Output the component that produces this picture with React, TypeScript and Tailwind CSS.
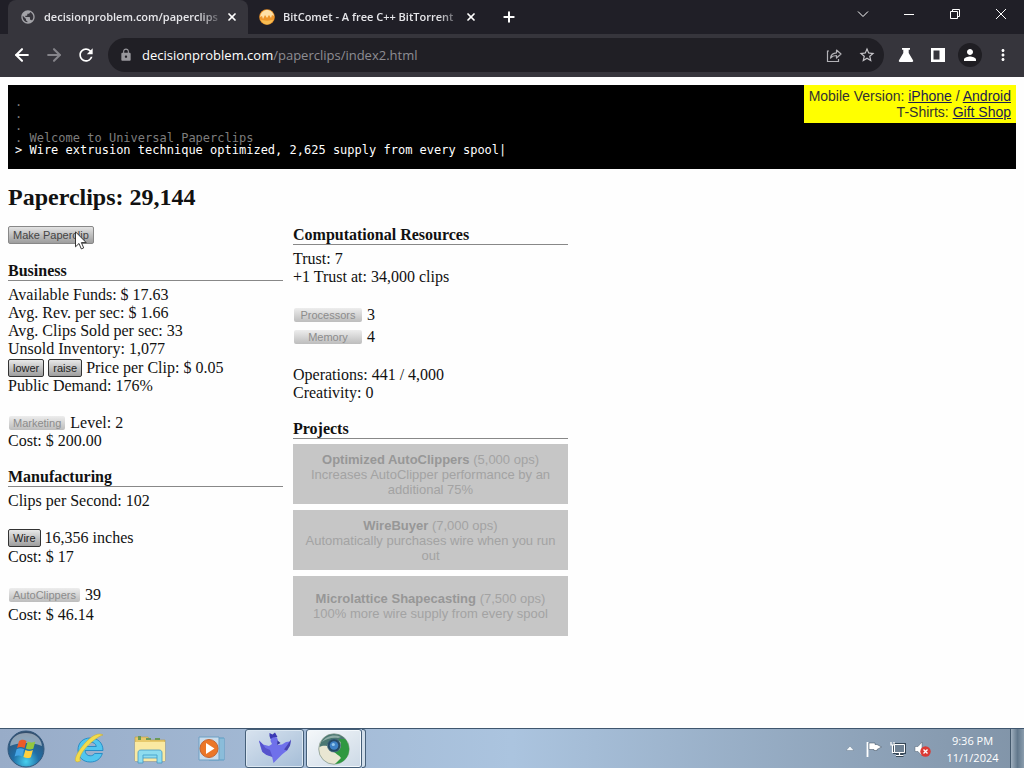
import type { ReactNode } from "react";
import { ArrowLeft, ArrowRight, Plus, X } from "lucide-react";
import { MdLock, MdMoreVert, MdPerson, MdPublic, MdRefresh, MdStarBorder } from "react-icons/md";

const uiFont = "font-['Open_Sans','Noto_Sans',sans-serif]";

/* ---------- Browser chrome ---------- */

function TabTitle({ children }: { children: ReactNode }) {
  return (
    <span className="min-w-0 flex-1 overflow-hidden text-[11px] leading-4 font-semibold whitespace-nowrap text-[#e6e6ea] [mask-image:linear-gradient(to_right,black_86%,transparent)]">
      {children}
    </span>
  );
}

function TabStrip() {
  return (
    <div className="flex h-[34px] items-stretch bg-[#201f27] pl-2">
      <div className="flex w-60 items-center rounded-t-lg bg-[#36353c] pr-2 pl-3">
        <MdPublic className="mr-2 size-4 shrink-0 text-[#a3a3a8]" />
        <TabTitle>decisionproblem.com/paperclips</TabTitle>
        <button type="button" aria-label="Close tab" className="flex size-4 items-center justify-center text-white">
          <X className="size-3" strokeWidth={3.5} />
        </button>
      </div>
      <div className="flex w-60 items-center pr-[9px] pl-[11px]">
        <svg viewBox="0 0 16 16" className="mr-2 size-4 shrink-0" aria-hidden="true">
          <circle cx="8" cy="8" r="7.8" fill="#ee962c" />
          <path d="M1 8C2 3 5 1 8 1s6 2 7 6l-2-1-1 3-2-3-2 3-2-3-2 4-1-3z" fill="#ffe0a6" />
          <path d="M1.500 10.500C4 12 12 12 14.500 10.500 13 14 10 15.500 8 15.500S3 14 1.500 10.500z" fill="#f8bd52" />
        </svg>
        <TabTitle>BitComet - A free C++ BitTorrent</TabTitle>
        <button type="button" aria-label="Close tab" className="flex size-4 items-center justify-center text-white">
          <X className="size-3" strokeWidth={3.5} />
        </button>
      </div>
      <button type="button" aria-label="New tab" className="ml-[7px] flex w-7 items-center justify-center text-white">
        <Plus className="size-4" strokeWidth={3} />
      </button>
      <div className="ml-auto flex h-7 items-center text-white">
        <button type="button" aria-label="Search tabs" className="flex w-[46px] justify-center">
          <svg viewBox="0 0 12 12" className="size-3" fill="none" stroke="currentColor"><path d="M1 3.500l5 5 5-5" /></svg>
        </button>
        <button type="button" aria-label="Minimize" className="flex w-[46px] justify-center">
          <svg viewBox="0 0 10 10" className="size-2.5" fill="none" stroke="currentColor"><path d="M0 5.500h10" /></svg>
        </button>
        <button type="button" aria-label="Restore" className="flex w-[46px] justify-center">
          <svg viewBox="0 0 10 10" className="size-2.5" fill="none" stroke="currentColor"><path d="M.5 2.500h7v7h-7zM2.500 2.500v-2h7v7h-2" /></svg>
        </button>
        <button type="button" aria-label="Close" className="flex w-[46px] justify-center">
          <svg viewBox="0 0 10 10" className="size-2.5" fill="none" stroke="currentColor"><path d="M0 0l10 10M10 0L0 10" /></svg>
        </button>
      </div>
    </div>
  );
}

function Toolbar() {
  return (
    <div className="flex h-[43px] items-center bg-[#36353c] px-3 pb-0.5 text-white">
      <button type="button" aria-label="Back" className="mr-3"><ArrowLeft className="size-5" strokeWidth={2.5} /></button>
      <button type="button" aria-label="Forward" className="mr-3 text-[#85848a]"><ArrowRight className="size-5" strokeWidth={2.5} /></button>
      <button type="button" aria-label="Reload" className="mr-3"><MdRefresh className="size-5" /></button>
      <div className="flex h-[34px] min-w-0 flex-1 items-center rounded-full bg-[#201f25] pr-2 pl-[11px]">
        <MdLock className="mr-[9px] size-[14px] shrink-0 text-[#98979c]" />
        <div className="min-w-0 flex-1 overflow-hidden text-[13px] leading-5 whitespace-nowrap text-[#8e8d93]">
          <span className="text-white">decisionproblem.com</span>/paperclips/index2.html
        </div>
        <button type="button" aria-label="Share" className="mr-4">
          <svg viewBox="0 0 16 16" className="size-4" fill="none" stroke="#b3b2b7" strokeWidth="1.200">
            <path d="M3 4H1.500v10.500h11V12" />
            <path d="M4.500 11c.5-3.500 2.500-5 6-5.200V3l4.500 4-4.500 4V8.500C7.500 8.500 6 9.300 4.500 11z" strokeLinejoin="round" />
          </svg>
        </button>
        <button type="button" aria-label="Bookmark" className="text-[#c5c4c9]"><MdStarBorder className="size-[18px]" /></button>
      </div>
      <button type="button" aria-label="Labs" className="ml-3.5">
        <svg viewBox="0 0 16 16" className="size-4" fill="#fff"><path d="M4 1h8v1.700h-1.300V6L15 13.300c.5.9 0 1.700-.9 1.700H1.900c-.9 0-1.400-.8-.9-1.700L5.300 6V2.700H4z" /></svg>
      </button>
      <button type="button" aria-label="Side panel" className="ml-4">
        <svg viewBox="0 0 16 16" className="size-4" fill="#fff"><path fillRule="evenodd" d="M1 1h14v14H1zM3.500 3.500v9h6v-9z" /></svg>
      </button>
      <button type="button" aria-label="Profile" className="ml-3 flex size-6 items-center justify-center rounded-full bg-[#1f1e23]">
        <MdPerson className="size-[18px]" />
      </button>
      <button type="button" aria-label="Menu" className="ml-3"><MdMoreVert className="size-[18px]" /></button>
    </div>
  );
}

/* ---------- Game page ---------- */

function GameButton({ children, disabled = false, wide = false }: { children: ReactNode; disabled?: boolean; wide?: boolean }) {
  const look = disabled
    ? "h-[14px] border-transparent bg-linear-to-b from-[#ededed] to-[#bdbdbd] px-[3px] text-[#8c8c8c] leading-[12px] mx-px"
    : "h-[18px] border-[#333] bg-linear-to-b from-[#ededed] to-[#999] px-1 text-[#222] leading-4";
  return (
    <button
      type="button"
      disabled={disabled}
      className={`rounded-[2px] border bg-origin-border text-[11px] font-['Liberation_Sans',Arial,sans-serif] whitespace-nowrap ${wide ? "w-[68px]" : ""} ${look}`}
    >
      {children}
    </button>
  );
}

function SectionTitle({ children }: { children: ReactNode }) {
  return <h2 className="mb-[5px] border-b border-[#888] text-[16px] leading-[18px] font-bold">{children}</h2>;
}

const consoleLines = [".", ".", ".", ". Welcome to Universal Paperclips"];

function Console() {
  return (
    <div className="relative bg-black px-[7px] pt-[11px] pb-[13px] font-['DejaVu_Sans_Mono',monospace] text-[12px] leading-3 text-[#7d7d7d]">
      {consoleLines.map((line, i) => (
        <div key={i}>{line}</div>
      ))}
      <div className="text-white">&gt; Wire extrusion technique optimized, 2,625 supply from every spool|</div>
      <div className="absolute top-0 right-0 bg-[#ffff00] px-[5px] py-[3px] text-right font-['Liberation_Sans',Arial,sans-serif] text-[14px] leading-4 text-[#333]">
        <div>
          Mobile Version: <a href="#iphone" className="text-[#1c1c50] underline">iPhone</a> /{" "}
          <a href="#android" className="text-[#1c1c50] underline">Android</a>
        </div>
        <div>
          T-Shirts: <a href="#shop" className="text-[#1c1c50] underline">Gift Shop</a>
        </div>
      </div>
    </div>
  );
}

const projects = [
  { name: "Optimized AutoClippers", cost: "(5,000 ops)", text: "Increases AutoClipper performance by an additional 75%" },
  { name: "WireBuyer", cost: "(7,000 ops)", text: "Automatically purchases wire when you run out" },
  { name: "Microlattice Shapecasting", cost: "(7,500 ops)", text: "100% more wire supply from every spool" },
];

function MouseCursor() {
  return (
    <svg viewBox="0 0 12 19" className="absolute top-[5px] left-[67px] h-[19px] w-3" aria-hidden="true">
      <path d="M.5.8v15l3.500-3.300 2.300 5.400 2.400-1-2.300-5.300h4.800z" fill="#fff" stroke="#222" strokeWidth=".9" />
    </svg>
  );
}

function Game() {
  return (
    <main className="flex-1 bg-[#fefefe] p-2 pb-10 font-['Liberation_Serif','Times_New_Roman',serif] text-[16px] leading-[18px] text-[#111]">
      <Console />
      <h1 className="mt-3.5 mb-[15px] text-2xl leading-7 font-bold">Paperclips: 29,144</h1>
      <div className="grid max-w-[560px] grid-cols-2 gap-x-2.5">
        <div>
          <div className="relative mb-[18px] flex">
            <button
              type="button"
              className="h-[18px] rounded-[2px] border border-[#888] bg-linear-to-b from-[#e8e8e8] to-[#999] bg-origin-border px-1 font-['Liberation_Sans',Arial,sans-serif] text-[11px] leading-4 text-[#444]"
            >
              Make Paperclip
            </button>
            <MouseCursor />
          </div>

          <section className="mb-[18px]">
            <SectionTitle>Business</SectionTitle>
            <div>Available Funds: $ 17.63</div>
            <div>Avg. Rev. per sec: $ 1.66</div>
            <div>Avg. Clips Sold per sec: 33</div>
            <div>Unsold Inventory: 1,077</div>
            <div className="flex h-[19px] items-center gap-1">
              <GameButton>lower</GameButton>
              <GameButton>raise</GameButton>
              <span>Price per Clip: $ 0.05</span>
            </div>
            <div>Public Demand: 176%</div>
            <div className="mt-[18px] flex h-[19px] items-center gap-1">
              <GameButton disabled>Marketing</GameButton>
              <span>Level: 2</span>
            </div>
            <div>Cost: $ 200.00</div>
          </section>

          <section>
            <SectionTitle>Manufacturing</SectionTitle>
            <div>Clips per Second: 102</div>
            <div className="mt-[18px] flex h-5 items-center gap-1">
              <GameButton>Wire</GameButton>
              <span>16,356 inches</span>
            </div>
            <div>Cost: $ 17</div>
            <div className="mt-[18px] flex h-[22px] items-center gap-1">
              <GameButton disabled>AutoClippers</GameButton>
              <span>39</span>
            </div>
            <div>Cost: $ 46.14</div>
          </section>
        </div>

        <div>
          <section className="mb-[18px]">
            <SectionTitle>Computational Resources</SectionTitle>
            <div>Trust: 7</div>
            <div>+1 Trust at: 34,000 clips</div>
            <div className="mt-[18px] flex h-[22px] items-center gap-1">
              <GameButton disabled wide>Processors</GameButton>
              <span>3</span>
            </div>
            <div className="flex h-[22px] items-center gap-1">
              <GameButton disabled wide>Memory</GameButton>
              <span>4</span>
            </div>
            <div className="mt-[18px]">Operations: 441 / 4,000</div>
            <div>Creativity: 0</div>
          </section>

          <section>
            <SectionTitle>Projects</SectionTitle>
            <div className="flex flex-col gap-1.5">
              {projects.map((p) => (
                <button
                  key={p.name}
                  type="button"
                  disabled
                  className="min-h-[60px] bg-[#c6c6c6] px-1.5 text-center font-['Liberation_Sans',Arial,sans-serif] text-[13px] leading-[15px] text-[#a3a3a3]"
                >
                  <span className="font-bold text-[#979797]">{p.name}</span> {p.cost}
                  <br />
                  {p.text}
                </button>
              ))}
            </div>
          </section>
        </div>
      </div>
    </main>
  );
}

/* ---------- Taskbar ---------- */

function StartOrb() {
  return (
    <svg viewBox="0 0 40 40" className="size-10" aria-hidden="true">
      <defs>
        <radialGradient id="orb" cx="50%" cy="85%" r="80%">
          <stop offset="0" stopColor="#48d0ee" />
          <stop offset=".45" stopColor="#1f6ea6" />
          <stop offset="1" stopColor="#35506e" />
        </radialGradient>
      </defs>
      <circle cx="20" cy="20" r="18" fill="url(#orb)" stroke="#33587c" />
      <path d="M4 17C5 8 12 4 20 4s15 4 16 13c-9-4-23-4-32 0z" fill="#fff" opacity=".45" />
      <path d="M13 12c3-2 5-1.500 7.500 0L18.500 19c-3-1.500-5-1.500-7.500 0z" fill="#ec5a29" />
      <path d="M21.700 12.500c2.500 1.300 5 1.300 7.600 0l-2 7.200c-2.500 1.200-5 1-7.500-.3z" fill="#93c740" />
      <path d="M10.600 20.300c2.500-1.500 5-1.300 7.500 0l-2 7.200c-2.500-1.400-4.800-1.400-7.500 0z" fill="#45a4e4" />
      <path d="M19.400 20.900c2.500 1.400 5 1.300 7.500.1l-2 7.200c-2.500 1.300-5 1-7.500-.3z" fill="#ffd03f" />
    </svg>
  );
}

function ExplorerE() {
  return (
    <svg viewBox="0 0 34 34" className="size-[34px]" aria-hidden="true">
      <path d="M31 18.500H13c.3 3.300 2.200 5.300 5.200 5.300 2 0 3.500-.8 4.400-2.300h7.800C28.500 27 24.300 30 18.200 30 11 30 6 25.300 6 18S11 6 18.200 6C26 6 31 11 31 18.500zM13 14.500h11.300c-.4-2.700-2.600-4.300-5.700-4.300s-5.100 1.600-5.600 4.300z" fill="#52c6ef" stroke="#2089c4" strokeWidth=".9" />
      <path d="M31 3c-4-2.500-10 0-16 6C8 16 1 27 4 29.500c1 .8 2.500.4 4.500-.8C6.500 27 9 20 17 12.500 23 7 28 3.500 31 3z" fill="#f2dc4e" stroke="#c8a92a" strokeWidth=".5" />
    </svg>
  );
}

function FolderIcon() {
  return (
    <svg viewBox="0 0 34 34" className="size-[34px]" aria-hidden="true">
      <path d="M2 5h13l2 3h15v21H2z" fill="#e7c96b" stroke="#bd9b40" strokeWidth=".6" />
      <path d="M5 4h3v4H5zM13 6h5v2h-5zM22 6h5v2h-5z" fill="#6c9a57" />
      <path d="M2 10h30v19H2z" fill="#fae9a2" />
      <path d="M5 31V21c0-2 1-3 3-3h18c2 0 3 1 3 3v10h-5v-5H10v5z" fill="#8edcef" stroke="#4597c3" strokeWidth=".8" />
      <path d="M10 26v-3h14v3" fill="none" stroke="#4ba6ce" />
    </svg>
  );
}

function MediaIcon() {
  return (
    <svg viewBox="0 0 34 34" className="size-[34px]" aria-hidden="true">
      <path d="M15 6h15v22H15z" fill="#b9dcef" stroke="#5d9dc4" />
      <path d="M26 6v22M28 6v22" stroke="#5d9dc4" />
      <path d="M5 5h20v23H5z" fill="#c9dcec" stroke="#6c9fc3" />
      <circle cx="15" cy="16.500" r="9" fill="#eb7628" stroke="#c46431" />
      <path d="M12 11v11l8.500-5.500z" fill="#fff" />
    </svg>
  );
}

function BirdIcon() {
  return (
    <svg viewBox="0 0 36 34" className="h-[34px] w-9" aria-hidden="true">
      <path d="M2 8.500l4 4 6 1.500 3-2-1.500-3 .5-3.500L17 5l3 .5 1 3-1 4.500 5-.5 4-2.500 4-.5 1-2-1 6-3 5-5 4-3.500 3.500-5 5-1.500-6.500-6-2-4-3-1.500-5z" fill="#6f70ea" />
      <path d="M2 8.500l4 4 2.500 3.500 4.500 2 2.500 7-6-2-4-3-1.500-5z" fill="#5653cc" />
      <path d="M34 7.500l-1 6-3 5-3-1 3-4z" fill="#4744b0" />
      <path d="M12.500 1l3 1.500L18 .5l2.500 4.500-4.500.5-2.500 1.500-1-3z" fill="#3a38b4" />
      <path d="M20.500 8.500l3 2.500-3.500 2z" fill="#3230a0" />
    </svg>
  );
}

function GlobeEyeIcon() {
  return (
    <svg viewBox="0 0 32 32" className="size-8" aria-hidden="true">
      <circle cx="16" cy="16" r="15.300" fill="#e9e6d2" stroke="#688273" strokeWidth=".6" />
      <path d="M1.500 14C3 5 9 1 16 1c6 0 11 3 13 8l-13-1c-4 0-6 2-7 5-3-.5-5-.3-7.500 1z" fill="#4b7772" />
      <path d="M21 6h6c8 8 4 24-10 25l6-6c-2-3-5-4-7-6 4 0 7-3 7-7 0-2-1-4-2-6z" fill="#2f9841" />
      <path d="M4 9C8 3 16 1 23 4l-3 1C14 4 8 6 4 9z" fill="#8fada6" />
      <circle cx="16" cy="12.500" r="6.600" fill="#254966" stroke="#476e80" strokeWidth=".6" />
      <circle cx="16" cy="12.500" r="4.300" fill="#3f82c7" />
      <circle cx="15.300" cy="11.500" r="1.600" fill="#94c8ed" />
    </svg>
  );
}

function Taskbar() {
  return (
    <footer className="flex h-10 items-stretch border-t border-[#3f566e] bg-linear-to-r from-[#98acc8] via-[#abc4df] to-[#8194a8]">
      <div className="flex items-center pl-1.5">
        <button type="button" aria-label="Start" className="-my-px mr-[26px]"><StartOrb /></button>
        <button type="button" aria-label="Internet Explorer" className="mr-[27px]"><ExplorerE /></button>
        <button type="button" aria-label="File Explorer" className="mr-[27px]"><FolderIcon /></button>
        <button type="button" aria-label="Media Player" className="mr-[17px]"><MediaIcon /></button>
      </div>
      <button type="button" aria-label="BitComet" className="flex w-[59px] items-center justify-center rounded-[3px] border border-[#455f79] bg-linear-to-br from-[#d8e3ef] to-[#a5bdd7] shadow-[inset_0_0_0_1px_#dbe7f2]">
        <BirdIcon />
      </button>
      <button type="button" aria-label="Browser" className="ml-0.5 flex w-[56px] items-center justify-center rounded-[3px] border border-[#455f79] bg-linear-to-br from-[#f5f8fa] to-[#ccd9e6] shadow-[inset_0_0_0_1px_#f3f8fc]">
        <GlobeEyeIcon />
      </button>
      <div className="w-1 rounded-r-[3px] border border-l-0 border-[#455f79] bg-[#d0dde9]" />
      <div className="ml-auto flex items-center">
        <button type="button" aria-label="Show hidden icons" className="mr-3">
          <svg viewBox="0 0 8 5" className="h-[5px] w-2"><path d="M4 0l4 4.500H0z" fill="#f4f8fb" stroke="#566a7d" strokeWidth=".4" /></svg>
        </button>
        <svg viewBox="0 0 16 16" className="mr-2 size-4" aria-label="Action Center" role="img">
          <path d="M1.500 1v15" stroke="#fff" strokeWidth="1.800" />
          <path d="M3 2h6v1.500h2L15.500 6 11 8.500v1H8V8.500H3z" fill="#fff" stroke="#38495a" strokeWidth=".5" />
        </svg>
        <svg viewBox="0 0 16 16" className="mr-2 size-4" fill="none" aria-label="Network" role="img">
          <path d="M4.500 3.500h10v8h-10zM9.500 12v2.500M6 14.500h7.500" stroke="#354656" strokeWidth="3" />
          <path d="M4.500 3.500h10v8h-10z" fill="#6f8193" stroke="#fff" />
          <path d="M9.500 12v2.500M6 14.500h7.500M1 1v3h3V1M2.500 4v7.500h2" stroke="#fff" strokeWidth="1.200" />
        </svg>
        <svg viewBox="0 0 17 16" className="mr-3.5 h-4 w-[17px]" aria-label="Muted" role="img">
          <path d="M1 5.500h3L8 1v14l-4-4.500H1z" fill="#fff" stroke="#536273" strokeWidth=".5" />
          <circle cx="11.500" cy="10.500" r="5.200" fill="#da3a34" />
          <path d="M9.500 8.500l4 4M13.500 8.500l-4 4" stroke="#fff" strokeWidth="1.400" />
        </svg>
        <div className="mr-2.5 w-[55px] text-center text-[11px] leading-[17px] whitespace-nowrap text-white">
          <div>9:36 PM</div>
          <div>11/1/2024</div>
        </div>
        <button type="button" aria-label="Show desktop" className="w-3.5 self-stretch border-l border-[#44596d] bg-linear-to-r from-[#a0b0bf] via-[#62788c] to-[#8b9dad]" />
      </div>
    </footer>
  );
}

export default function App() {
  return (
    <div className={`flex min-h-screen flex-col ${uiFont}`}>
      <header>
        <TabStrip />
        <Toolbar />
      </header>
      <Game />
      <Taskbar />
    </div>
  );
}
